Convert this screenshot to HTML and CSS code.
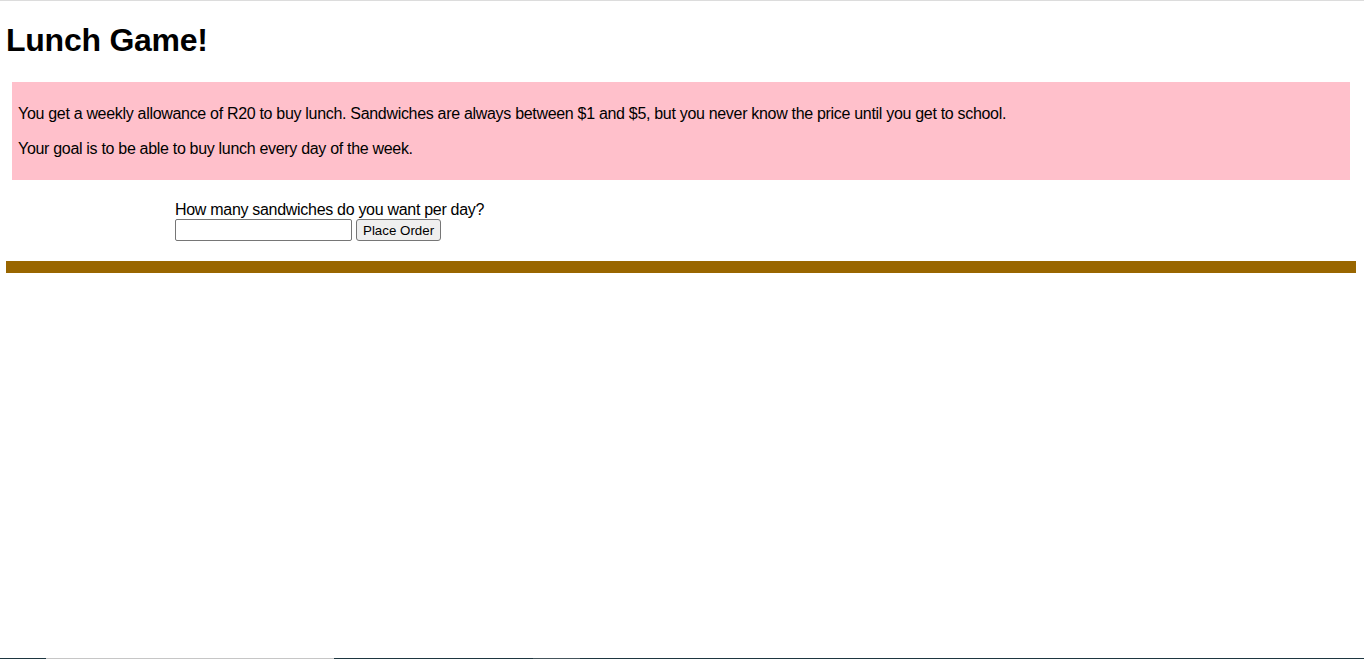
FILE: index.html
```html
<!DOCTYPE html>
<html lang="en">
<head>
<meta charset="utf-8">
<title>Lunch Game!</title>
<link rel="stylesheet" href="styles.css">
</head>
<body>
<h1 class="title">Lunch Game!</h1>
<div class="intro">
  <p>You get a weekly allowance of R20 to buy lunch. Sandwiches are always between $1 and $5, but you never know the price until you get to school.</p>
  <p>Your goal is to be able to buy lunch every day of the week.</p>
</div>
<form class="order">
  <label class="order-label" for="qty">How many sandwiches do you want per day?</label>
  <div class="order-row">
    <input id="qty" class="order-input" type="text">
    <button type="button" class="order-btn">Place Order</button>
  </div>
</form>
<div class="divider"></div>
<div class="edge"></div>
</body>
</html>
```
FILE: styles.css
```css
html {
  background: #fff;
}
body {
  margin: 0;
  padding: 0 8px 0 6px;
  border-top: 1px solid #dcdcdc;
  font-family: "Liberation Sans", Arial, sans-serif;
  color: #000;
  font-size: 16px;
}
.title {
  margin: 21px 0 0;
  font-size: 32px;
  line-height: 37px;
  font-weight: bold;
  letter-spacing: -0.25px;
}
.intro {
  margin: 23px 6px 0;
  padding: 6px;
  background: #ffc0cb;
}
.intro p {
  margin: 16px 0;
  line-height: 19px;
  letter-spacing: -0.31px;
}
.order {
  margin: 20px 0 0 169px;
  display: flex;
  flex-direction: column;
  align-items: flex-start;
}
.order-label {
  line-height: 19px;
  letter-spacing: -0.3px;
}
.order-row {
  display: flex;
  gap: 4px;
}
.order-input {
  box-sizing: border-box;
  width: 177px;
  height: 22px;
  margin: 0;
  border: 1px solid #767676;
  border-radius: 2px;
  padding: 1px 2px;
  font-family: "Liberation Sans", Arial, sans-serif;
  font-size: 13.33px;
  background: #fff;
}
.order-btn {
  box-sizing: border-box;
  height: 22px;
  margin: 0;
  padding: 1px 6px;
  border: 1px solid #767676;
  border-radius: 3px;
  background: #efefef;
  font-family: "Liberation Sans", Arial, sans-serif;
  font-size: 13.33px;
  color: #000;
  white-space: nowrap;
}
.divider {
  margin-top: 20px;
  height: 12px;
  background: #996600;
}
.edge {
  position: fixed;
  left: 0;
  right: 0;
  bottom: 0;
  height: 1px;
  background: linear-gradient(to right,
    #1e3640 0, #1e3640 46px,
    #c6c6c6 46px, #c6c6c6 334px,
    #1e3640 334px, #1e3640 533px,
    #45555c 533px, #45555c 580px,
    #1e3640 580px, #1e3640 100%);
}
```
